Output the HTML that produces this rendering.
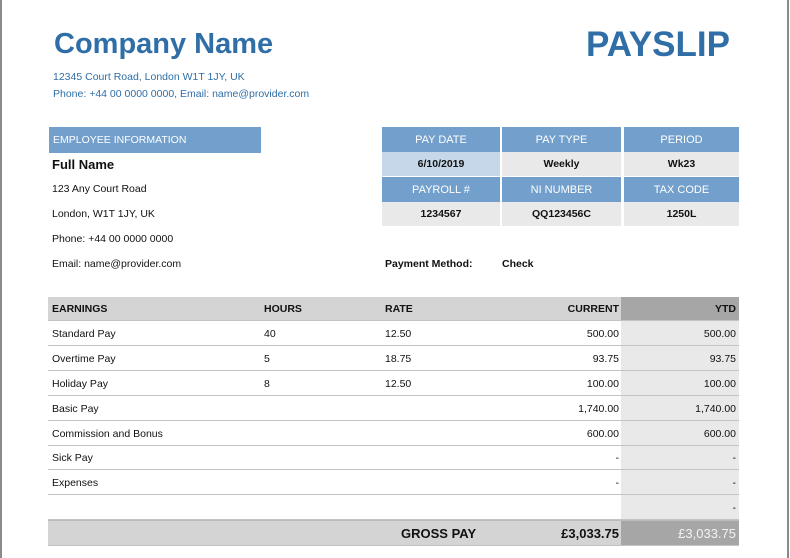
<!DOCTYPE html>
<html><head><style>
body{margin:0;width:790px;height:558px;background:#fff;position:relative;overflow:hidden;font-family:"Liberation Sans",sans-serif;}
.a{position:absolute;white-space:nowrap;}
.lb{border-left:2px solid #8a8a8a;position:absolute;left:0;top:0;height:558px;}
.rb{border-left:2px solid #8a8a8a;position:absolute;left:787px;top:0;height:558px;}
.h{background:#729fcb;color:#fff;font-size:11px;text-align:center;line-height:27px;height:25px;overflow:hidden;position:absolute;}
.v{background:#e9e9e9;color:#111;font-size:10.5px;font-weight:bold;text-align:center;line-height:24px;position:absolute;}
.t{font-size:11px;color:#111;}
.row{position:absolute;left:48px;width:691px;border-bottom:1.5px solid #c4c4c4;height:23px;font-size:10.5px;color:#111;}
.row span{position:absolute;top:6px;}
.r1{right:120px}.r2{right:3px}
</style></head><body>
<div class="lb"></div><div class="rb"></div>
<div class="a" style="left:54px;top:28px;font-size:29px;font-weight:bold;color:#2f6ea6;">Company Name</div>
<div class="a" style="left:586px;top:25px;font-size:35px;font-weight:bold;color:#2f6ea6;">PAYSLIP</div>
<div class="a" style="left:53px;top:71px;font-size:10.5px;color:#2f6ea6;">12345 Court Road, London W1T 1JY, UK</div>
<div class="a" style="left:53px;top:88px;font-size:10.5px;color:#2f6ea6;">Phone: +44 00 0000 0000, Email: name@provider.com</div>
<div class="a" style="left:49px;top:127px;width:212px;height:26px;background:#729fcb;color:#fff;font-size:10.5px;line-height:26px;padding-left:4px;box-sizing:border-box;">EMPLOYEE INFORMATION</div>
<div class="a" style="left:52px;top:157px;font-size:13px;font-weight:bold;color:#111;">Full Name</div>
<div class="a t" style="left:52px;top:183px;font-size:10.5px;">123 Any Court Road</div>
<div class="a t" style="left:52px;top:208px;font-size:10.5px;">London, W1T 1JY, UK</div>
<div class="a t" style="left:52px;top:233px;font-size:10.5px;">Phone: +44 00 0000 0000</div>
<div class="a t" style="left:52px;top:258px;font-size:10.5px;">Email: name@provider.com</div>

<div class="h" style="left:382px;top:127px;width:118px;">PAY DATE</div>
<div class="h" style="left:502px;top:127px;width:119px;">PAY TYPE</div>
<div class="h" style="left:624px;top:127px;width:115px;">PERIOD</div>
<div class="v" style="left:382px;top:152px;width:118px;background:#c5d7e8;">6/10/2019</div>
<div class="v" style="left:502px;top:152px;width:119px;">Weekly</div>
<div class="v" style="left:624px;top:152px;width:115px;">Wk23</div>
<div class="h" style="left:382px;top:177px;width:118px;">PAYROLL #</div>
<div class="h" style="left:502px;top:177px;width:119px;">NI NUMBER</div>
<div class="h" style="left:624px;top:177px;width:115px;">TAX CODE</div>
<div class="v" style="left:382px;top:202px;width:118px;">1234567</div>
<div class="v" style="left:502px;top:202px;width:119px;">QQ123456C</div>
<div class="v" style="left:624px;top:202px;width:115px;">1250L</div>
<div class="a" style="left:385px;top:258px;font-size:10.5px;font-weight:bold;color:#111;">Payment Method:</div>
<div class="a" style="left:502px;top:258px;font-size:10.5px;font-weight:bold;color:#111;">Check</div>

<div class="a" style="left:621px;top:321px;width:118px;height:199px;background:#e9e9e9;"></div>
<div class="row" style="top:297px;background:#d4d4d4;font-weight:bold;"><div style="position:absolute;left:573px;top:0;width:118px;height:23px;background:#a6a6a6;"></div><span style="left:4px">EARNINGS</span><span style="left:216px">HOURS</span><span style="left:337px">RATE</span><span class="r1">CURRENT</span><span class="r2" style="position:absolute">YTD</span></div>
<div class="row" style="top:322px"><span style="left:4px">Standard Pay</span><span style="left:216px">40</span><span style="left:337px">12.50</span><span class="r1">500.00</span><span class="r2">500.00</span></div>
<div class="row" style="top:347px"><span style="left:4px">Overtime Pay</span><span style="left:216px">5</span><span style="left:337px">18.75</span><span class="r1">93.75</span><span class="r2">93.75</span></div>
<div class="row" style="top:372px"><span style="left:4px">Holiday Pay</span><span style="left:216px">8</span><span style="left:337px">12.50</span><span class="r1">100.00</span><span class="r2">100.00</span></div>
<div class="row" style="top:397px"><span style="left:4px">Basic Pay</span><span class="r1">1,740.00</span><span class="r2">1,740.00</span></div>
<div class="row" style="top:422px"><span style="left:4px">Commission and Bonus</span><span class="r1">600.00</span><span class="r2">600.00</span></div>
<div class="row" style="top:446px"><span style="left:4px">Sick Pay</span><span class="r1">-</span><span class="r2">-</span></div>
<div class="row" style="top:471px"><span style="left:4px">Expenses</span><span class="r1">-</span><span class="r2">-</span></div>
<div class="row" style="top:496px"><span class="r2">-</span></div>
<div class="row" style="top:520px;height:24px;background:#d4d4d4;border-top:1.5px solid #bbb;"><div style="position:absolute;left:573px;top:0;width:118px;height:24px;background:#a6a6a6;"></div><span style="left:353px;top:5px;font-size:13px;font-weight:bold;">GROSS PAY</span><span class="r1" style="top:5px;font-size:13px;font-weight:bold;">£3,033.75</span><span class="r2" style="top:5px;font-size:13px;color:#f2f2f2;">£3,033.75</span></div>
</body></html>
